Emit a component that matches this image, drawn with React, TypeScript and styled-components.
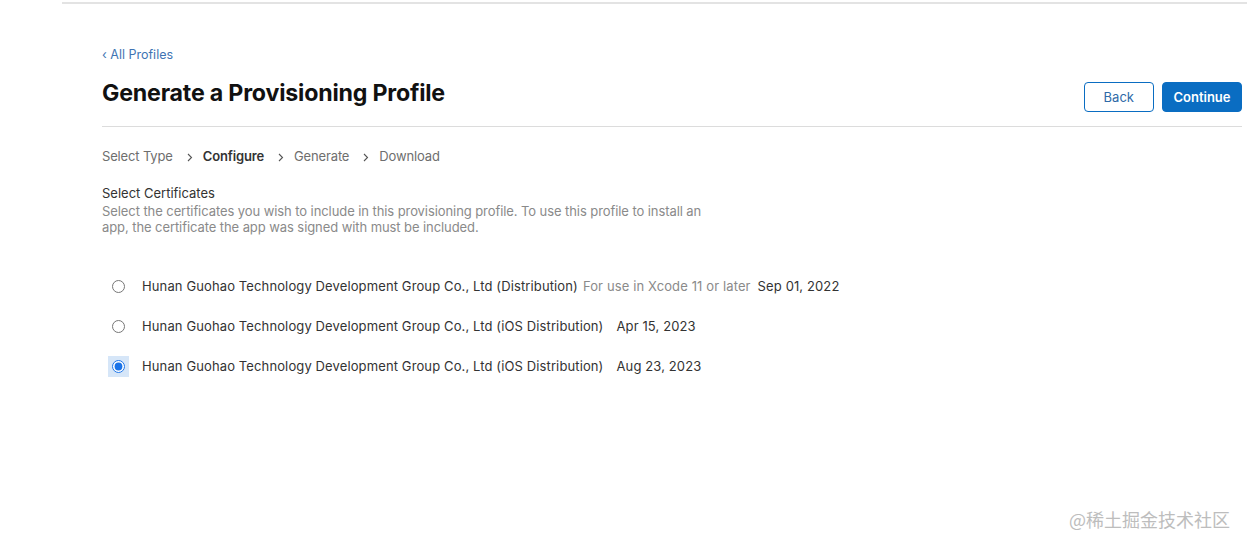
import React from "react";
import styled, { createGlobalStyle } from "styled-components";

const Global = createGlobalStyle`
  html, body { margin: 0; padding: 0; background: #fff; }
  body { font-family: Inter, "Noto Sans", sans-serif; color: #333; -webkit-font-smoothing: antialiased; }
  * { box-sizing: border-box; }
`;

const Page = styled.div`
  position: relative;
  width: 1247px;
  height: 549px;
  overflow: hidden;
  padding-top: 2px;
`;

const TopRule = styled.div`
  margin-left: 62px;
  height: 2px;
  background: #e3e3e3;
`;

const Main = styled.main`
  margin: 0 5px 0 102px;
  padding-top: 39px;
`;

const BackLink = styled.a`
  display: inline-block;
  font-size: 12.5px;
  line-height: 16px;
  color: #3f74b3;
  text-decoration: none;
`;

const HeaderRow = styled.div`
  display: flex;
  align-items: flex-start;
  justify-content: space-between;
  height: 64px;
  border-bottom: 1px solid #dcdcdc;
`;

const Title = styled.h1`
  margin: 15px 0 0;
  font-size: 23.2px;
  line-height: 30px;
  font-weight: 700;
  color: #111;
  letter-spacing: -0.2px;
`;

const Actions = styled.div`
  display: flex;
  gap: 8px;
  margin-top: 19px;
`;

const Button = styled.button<{ $primary?: boolean }>`
  height: 30px;
  padding: 0 ${(p) => (p.$primary ? "10.5px" : "19px")};
  border-radius: 4px;
  font-family: inherit;
  font-size: 13px;
  font-weight: ${(p) => (p.$primary ? 600 : 400)};
  border: 1px solid #0a6dc2;
  background: ${(p) => (p.$primary ? "#0a6dc2" : "#fff")};
  color: ${(p) => (p.$primary ? "#fff" : "#2f6aa8")};
`;

const Steps = styled.ol`
  display: flex;
  align-items: center;
  list-style: none;
  margin: 0;
  padding: 21px 0 0;
  font-size: 13px;
  line-height: 16px;
  letter-spacing: -0.15px;
`;

const Step = styled.li<{ $active?: boolean }>`
  display: flex;
  align-items: center;
  color: ${(p) => (p.$active ? "#333" : "#6e6e6e")};
  font-weight: ${(p) => (p.$active ? 600 : 400)};
`;

const Chevron = styled.span`
  display: inline-flex;
  margin: 3px 10px 0 14px;
  color: #555;
`;

const Section = styled.section`
  padding-top: 21px;
`;

const SectionTitle = styled.h2`
  margin: 0;
  font-size: 13px;
  font-weight: 400;
  line-height: 16px;
  color: #333;
`;

const SectionDesc = styled.p`
  margin: 2px 0 0;
  width: 610px;
  font-size: 13px;
  line-height: 16px;
  letter-spacing: -0.08px;
  color: #8a8a8a;
`;

const List = styled.div`
  display: flex;
  flex-direction: column;
  gap: 20px;
  padding-top: 41px;
`;

const Row = styled.label`
  display: flex;
  align-items: center;
  height: 20px;
  font-size: 13px;
  letter-spacing: 0.12px;
  color: #333;
`;

const RadioWrap = styled.span<{ $focus?: boolean }>`
  display: inline-flex;
  align-items: center;
  justify-content: center;
  width: 21px;
  height: 21px;
  margin: 0 13px 0 6px;
  background: ${(p) => (p.$focus ? "#d6e6f8" : "transparent")};
`;

const Radio = styled.input`
  margin: 0;
  width: 13px;
  height: 13px;
  accent-color: #1a73e8;
`;

const Note = styled.span`
  margin-left: 5px;
  color: #8a8a8a;
`;

const DateText = styled.span<{ $gap: number }>`
  margin-left: ${(p) => p.$gap}px;
  color: #333;
`;

const Watermark = styled.div`
  position: absolute;
  right: 17px;
  bottom: 17px;
  font-family: "Noto Sans CJK SC", sans-serif;
  font-size: 18px;
  color: #bdbdbd;
`;

const ChevronIcon = () => (
  <svg width="6" height="9" viewBox="0 0 6 9" fill="none">
    <path d="M1 1l3.5 3.5L1 8" stroke="currentColor" strokeWidth="1.1" />
  </svg>
);

const certs = [
  { name: "Hunan Guohao Technology Development Group Co., Ltd (Distribution)", note: "For use in Xcode 11 or later", date: "Sep 01, 2022", gap: 7 },
  { name: "Hunan Guohao Technology Development Group Co., Ltd (iOS Distribution)", date: "Apr 15, 2023", gap: 13 },
  { name: "Hunan Guohao Technology Development Group Co., Ltd (iOS Distribution)", date: "Aug 23, 2023", gap: 13, checked: true },
];

const steps = ["Select Type", "Configure", "Generate", "Download"];

export default function App() {
  return (
    <Page>
      <Global />
      <TopRule />
      <Main>
        <BackLink href="#">‹ All Profiles</BackLink>
        <HeaderRow>
          <Title>Generate a Provisioning Profile</Title>
          <Actions>
            <Button>Back</Button>
            <Button $primary>Continue</Button>
          </Actions>
        </HeaderRow>
        <Steps>
          {steps.map((s, i) => (
            <React.Fragment key={s}>
              {i > 0 && (
                <Chevron>
                  <ChevronIcon />
                </Chevron>
              )}
              <Step $active={s === "Configure"}>{s}</Step>
            </React.Fragment>
          ))}
        </Steps>
        <Section>
          <SectionTitle>Select Certificates</SectionTitle>
          <SectionDesc>
            Select the certificates you wish to include in this provisioning profile. To use this profile to install an app, the certificate the app was signed with must be included.
          </SectionDesc>
          <List>
            {certs.map((c, i) => (
              <Row key={i}>
                <RadioWrap $focus={c.checked}>
                  <Radio type="radio" name="cert" defaultChecked={c.checked} />
                </RadioWrap>
                <span>{c.name}</span>
                {c.note && <Note>{c.note}</Note>}
                <DateText $gap={c.gap}>{c.date}</DateText>
              </Row>
            ))}
          </List>
        </Section>
      </Main>
      <Watermark>@稀土掘金技术社区</Watermark>
    </Page>
  );
}
